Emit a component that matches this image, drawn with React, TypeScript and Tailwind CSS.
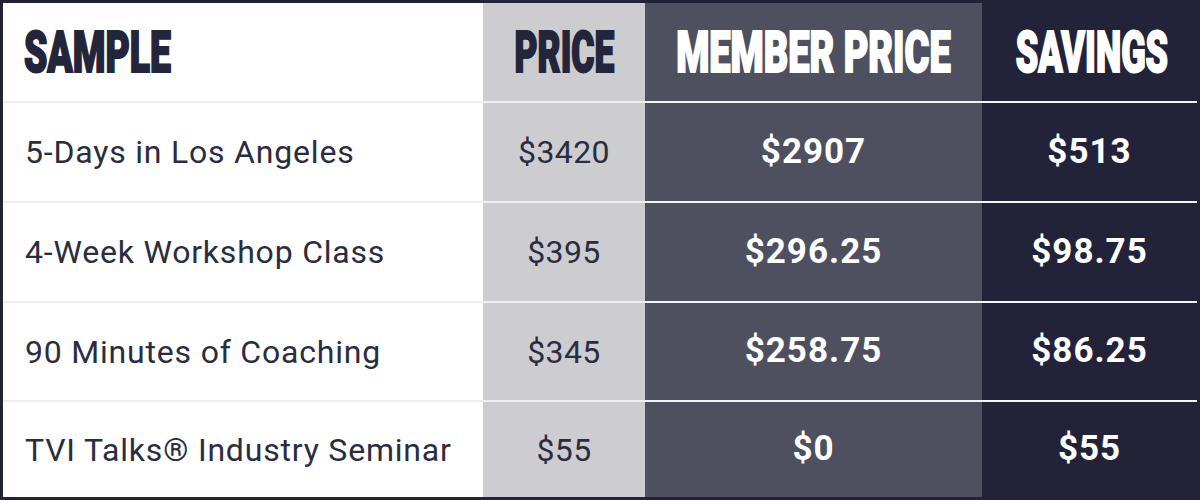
import React from "react";

const rows = [
  { name: "5-Days in Los Angeles", price: "$3420", member: "$2907", savings: "$513" },
  { name: "4-Week Workshop Class", price: "$395", member: "$296.25", savings: "$98.75" },
  { name: "90 Minutes of Coaching", price: "$345", member: "$258.75", savings: "$86.25" },
  { name: "TVI Talks® Industry Seminar", price: "$55", member: "$0", savings: "$55" },
];

const heights = ["h-[100px]", "h-[100px]", "h-[99px]", "flex-1"];

const headFont = { fontFamily: "Roboto, 'Liberation Sans', sans-serif" };

export default function App() {
  return (
    <div
      className="w-[1200px] h-[500px] border-[3px] border-[#222338] bg-white flex flex-col"
      style={headFont}
    >
      <div className="h-[98px] grid grid-cols-[480px_162px_337px_minmax(0,1fr)]">
        <div className="flex items-center pl-[21px] text-[#23253a] min-w-0">
          <span className="inline-block text-[57px] font-black leading-none scale-x-[0.655] origin-left [-webkit-text-stroke:2px_#23253a]">
            SAMPLE
          </span>
        </div>
        <div className="flex items-center justify-center bg-[#cdccd1] text-[#23253a] min-w-0">
          <span className="inline-block text-[57px] font-black leading-none scale-x-[0.62] origin-center [-webkit-text-stroke:2px_#23253a]">
            PRICE
          </span>
        </div>
        <div className="flex items-center justify-center bg-[#4e505f] text-white min-w-0">
          <span className="inline-block shrink-0 text-[57px] font-black leading-none scale-x-[0.665] origin-center whitespace-nowrap [-webkit-text-stroke:2px_#ffffff]">
            MEMBER PRICE
          </span>
        </div>
        <div className="flex items-center justify-center bg-[#222338] text-white min-w-0">
          <span className="inline-block shrink-0 text-[57px] font-black leading-none scale-x-[0.63] origin-center translate-x-[2px] [-webkit-text-stroke:2px_#ffffff]">
            SAVINGS
          </span>
        </div>
      </div>
      {rows.map((r, i) => (
        <div key={i} className={`${heights[i]} grid grid-cols-[480px_162px_337px_minmax(0,1fr)]`}>
          <div className="flex items-center pl-[22px] border-t-2 border-[#efefef] text-[#2a2c40] text-[32px] tracking-[0.8px]">
            {r.name}
          </div>
          <div className="flex items-center justify-center border-t-2 border-[#f0f0f0] bg-[#cdccd1] text-[#2a2c40] text-[32px] tracking-[0.4px]">
            {r.price}
          </div>
          <div className="flex items-center justify-center border-t-2 border-[#f4f4f4] bg-[#4e505f] text-white text-[35px] font-bold tracking-[1px]">
            {r.member}
          </div>
          <div className="flex items-center justify-center border-t-2 border-[#f4f4f4] bg-[#222338] text-white text-[35px] font-bold tracking-[1px]">
            {r.savings}
          </div>
        </div>
      ))}
    </div>
  );
}
